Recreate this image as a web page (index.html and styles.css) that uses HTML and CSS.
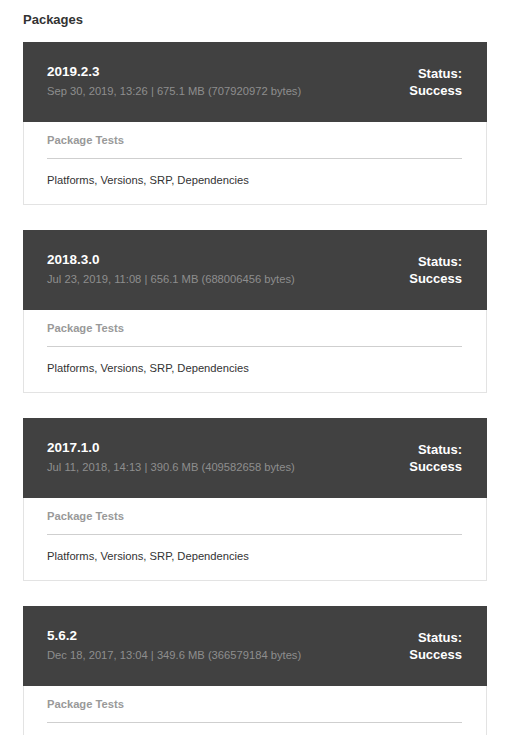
FILE: index.html
```html
<!DOCTYPE html>
<html>
<head>
<meta charset="utf-8">
<link rel="stylesheet" href="styles.css">
</head>
<body>
<div class="page">
  <h2 class="title">Packages</h2>
  <div class="list">
    <div class="card">
      <div class="card-head">
        <div class="info">
          <div class="version">2019.2.3</div>
          <div class="meta">Sep 30, 2019, 13:26 | 675.1 MB (707920972 bytes)</div>
        </div>
        <div class="status">Status:<br>Success</div>
      </div>
      <div class="card-body">
        <div class="section">Package Tests</div>
        <div class="tests">Platforms, Versions, SRP, Dependencies</div>
      </div>
    </div>
    <div class="card">
      <div class="card-head">
        <div class="info">
          <div class="version">2018.3.0</div>
          <div class="meta">Jul 23, 2019, 11:08 | 656.1 MB (688006456 bytes)</div>
        </div>
        <div class="status">Status:<br>Success</div>
      </div>
      <div class="card-body">
        <div class="section">Package Tests</div>
        <div class="tests">Platforms, Versions, SRP, Dependencies</div>
      </div>
    </div>
    <div class="card">
      <div class="card-head">
        <div class="info">
          <div class="version">2017.1.0</div>
          <div class="meta">Jul 11, 2018, 14:13 | 390.6 MB (409582658 bytes)</div>
        </div>
        <div class="status">Status:<br>Success</div>
      </div>
      <div class="card-body">
        <div class="section">Package Tests</div>
        <div class="tests">Platforms, Versions, SRP, Dependencies</div>
      </div>
    </div>
    <div class="card">
      <div class="card-head">
        <div class="info">
          <div class="version">5.6.2</div>
          <div class="meta">Dec 18, 2017, 13:04 | 349.6 MB (366579184 bytes)</div>
        </div>
        <div class="status">Status:<br>Success</div>
      </div>
      <div class="card-body">
        <div class="section">Package Tests</div>
        <div class="tests">Platforms, Versions, SRP, Dependencies</div>
      </div>
    </div>
  </div>
</div>
</body>
</html>
```
FILE: styles.css
```css
html, body {
  margin: 0;
  padding: 0;
  background: #fff;
  overflow: hidden;
}
body {
  font-family: "Liberation Sans", Arial, sans-serif;
  color: #333;
}
.page {
  padding: 12px 35px 0 23px;
}
.title {
  margin: 0;
  font-size: 13px;
  font-weight: bold;
  line-height: 16px;
  color: #333;
}
.list {
  margin-top: 14px;
  display: flex;
  flex-direction: column;
  gap: 25px;
}
.card {
  border: 1px solid #e3e3e3;
  background: #fff;
}
.card-head {
  margin: -1px -1px 0 -1px;
  background: #414141;
  height: 80px;
  box-sizing: border-box;
  padding: 21px 25px 0 24px;
  display: flex;
  justify-content: space-between;
  align-items: flex-start;
}
.version {
  color: #fff;
  font-weight: bold;
  font-size: 13.5px;
  line-height: 18px;
}
.meta {
  color: #8e8e8e;
  font-size: 11.2px;
  line-height: 14px;
  margin-top: 3px;
}
.status {
  color: #fff;
  font-weight: bold;
  font-size: 13px;
  line-height: 17px;
  text-align: right;
  margin-top: 2px;
}
.card-body {
  padding: 11px 24px 17px 23px;
}
.section {
  color: #999;
  font-weight: bold;
  font-size: 11.2px;
  line-height: 14px;
  padding-bottom: 11px;
  border-bottom: 1px solid #cfcfcf;
}
.tests {
  font-size: 11.2px;
  line-height: 14px;
  color: #333;
  margin-top: 14px;
}
```
